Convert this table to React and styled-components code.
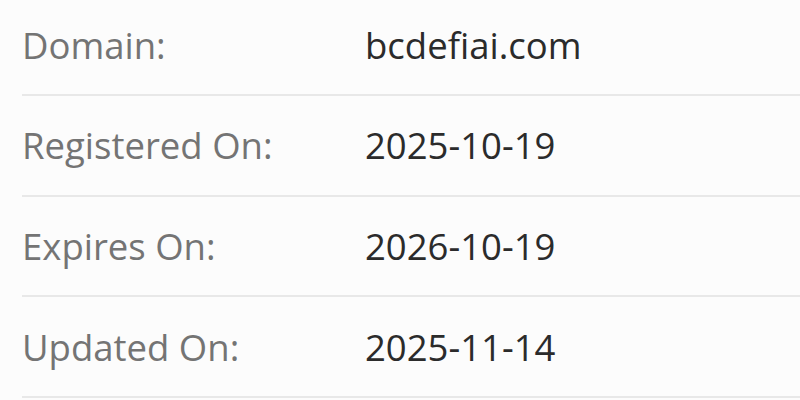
import styled, { createGlobalStyle } from "styled-components";

const GlobalStyle = createGlobalStyle`
  body {
    margin: 0;
    background: #fcfcfc;
    font-family: "Open Sans", "Liberation Sans", sans-serif;
  }
`;

const rows = [
  { label: "Domain:", value: "bcdefiai.com" },
  { label: "Registered On:", value: "2025-10-19" },
  { label: "Expires On:", value: "2026-10-19" },
  { label: "Updated On:", value: "2025-11-14" },
];

const App = () => {
  return (
    <>
      <GlobalStyle />
      <Table>
        {rows.map((r) => (
          <Row key={r.label}>
            <Label>{r.label}</Label>
            <Value>{r.value}</Value>
          </Row>
        ))}
      </Table>
    </>
  );
};

export default App;

const Table = styled.div`
  width: 800px;
  height: 400px;
  overflow: hidden;
  display: flex;
  flex-direction: column;
  padding-left: 22px;
  box-sizing: border-box;
`;
const Row = styled.div`
  height: 100.67px;
  flex-shrink: 0;
  display: grid;
  grid-template-columns: 343px 1fr;
  align-items: center;
  border-bottom: 2px solid #e8e8e8;
  box-sizing: border-box;
  &:first-child {
    margin-top: -4.7px;
  }
`;
const Label = styled.span`
  font-size: 36.5px;
  color: #747474;
`;
const Value = styled.span`
  font-size: 36.5px;
  color: #2b2b2b;
`;
